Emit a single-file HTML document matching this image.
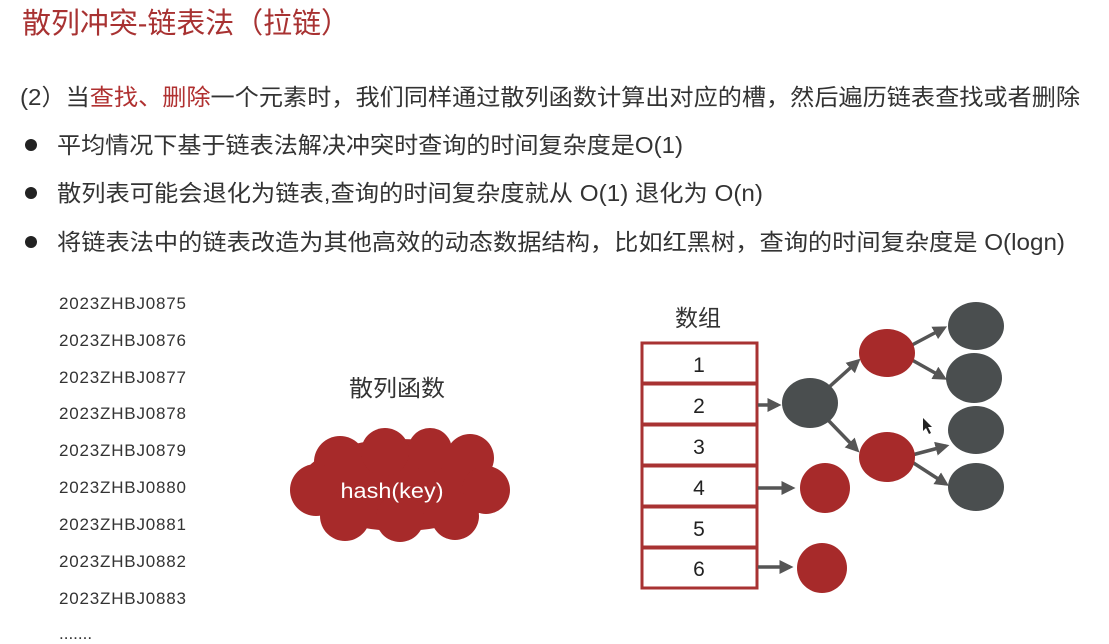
<!DOCTYPE html>
<html><head><meta charset="utf-8"><style>
html,body{margin:0;padding:0;background:#fff;width:1109px;height:644px;overflow:hidden}
svg{display:block}
text{font-family:"Liberation Sans","Noto Sans CJK SC",sans-serif}
</style></head><body>
<svg width="1109" height="644" viewBox="0 0 1109 644">
<text x="22" y="33" font-size="29" fill="#a83232" textLength="328" lengthAdjust="spacingAndGlyphs">散列冲突-链表法（拉链）</text>
<text x="20" y="105" font-size="23" fill="#333" textLength="1060" lengthAdjust="spacingAndGlyphs">(2）当<tspan fill="#b03030">查找、删除</tspan>一个元素时，我们同样通过散列函数计算出对应的槽，然后遍历链表查找或者删除</text>
<g fill="#222"><circle cx="31" cy="145" r="6"/><circle cx="31" cy="193" r="6"/><circle cx="31" cy="242" r="6"/></g>
<text x="57" y="153" font-size="23" fill="#333" textLength="626" lengthAdjust="spacingAndGlyphs">平均情况下基于链表法解决冲突时查询的时间复杂度是O(1)</text>
<text x="57" y="201" font-size="23" fill="#333" textLength="706" lengthAdjust="spacingAndGlyphs">散列表可能会退化为链表,查询的时间复杂度就从 O(1) 退化为 O(n)</text>
<text x="57" y="250" font-size="23" fill="#333" textLength="1008" lengthAdjust="spacingAndGlyphs">将链表法中的链表改造为其他高效的动态数据结构，比如红黑树，查询的时间复杂度是 O(logn)</text>
<g font-size="17" fill="#333">
<text x="59" y="309" textLength="127">2023ZHBJ0875</text><text x="59" y="346" textLength="127">2023ZHBJ0876</text><text x="59" y="383" textLength="127">2023ZHBJ0877</text>
<text x="59" y="419" textLength="127">2023ZHBJ0878</text><text x="59" y="456" textLength="127">2023ZHBJ0879</text><text x="59" y="493" textLength="127">2023ZHBJ0880</text>
<text x="59" y="530" textLength="127">2023ZHBJ0881</text><text x="59" y="567" textLength="127">2023ZHBJ0882</text><text x="59" y="604" textLength="127">2023ZHBJ0883</text>
<text x="59" y="639">.......</text></g>
<text x="349" y="396" font-size="23" fill="#333" textLength="96" lengthAdjust="spacingAndGlyphs">散列函数</text>
<g fill="#a72a2a">
<ellipse cx="400" cy="485" rx="100" ry="46"/>
<circle cx="340" cy="462" r="26"/><circle cx="385" cy="452" r="24"/><circle cx="430" cy="450" r="22"/><circle cx="470" cy="458" r="24"/>
<circle cx="316" cy="490" r="26"/><circle cx="486" cy="490" r="24"/><circle cx="345" cy="516" r="25"/><circle cx="400" cy="518" r="24"/><circle cx="455" cy="516" r="24"/>
</g>
<text x="392" y="498" font-size="21" fill="#fff" text-anchor="middle" textLength="103" lengthAdjust="spacingAndGlyphs">hash(key)</text>
<text x="698" y="326" font-size="23" fill="#333" text-anchor="middle">数组</text>
<g fill="#fff" stroke="#a83232" stroke-width="3">
<rect x="642" y="343" width="115" height="40"/><rect x="642" y="384" width="115" height="40"/><rect x="642" y="425" width="115" height="40"/>
<rect x="642" y="466" width="115" height="40"/><rect x="642" y="507" width="115" height="40"/><rect x="642" y="548" width="115" height="40"/></g>
<g font-size="21" fill="#222" text-anchor="middle">
<text x="699" y="372">1</text><text x="699" y="413">2</text><text x="699" y="454">3</text><text x="699" y="495">4</text><text x="699" y="536">5</text><text x="699" y="576">6</text></g>
<defs><marker id="a" markerWidth="4" markerHeight="4" refX="3" refY="2" orient="auto"><path d="M0,0L4,2L0,4z" fill="#555"/></marker></defs>
<g stroke="#555" stroke-width="3.5" marker-end="url(#a)">
<line x1="758" y1="405" x2="778" y2="405"/>
<line x1="758" y1="488" x2="792" y2="488"/>
<line x1="758" y1="567" x2="790" y2="567"/>
<line x1="828" y1="388" x2="858" y2="361"/>
<line x1="828" y1="420" x2="857" y2="450"/>
<line x1="912" y1="345" x2="944" y2="328"/>
<line x1="912" y1="360" x2="944" y2="378"/>
<line x1="912" y1="455" x2="946" y2="446"/>
<line x1="912" y1="462" x2="946" y2="484"/>
</g>
<g fill="#4a4e4f">
<ellipse cx="810" cy="403" rx="28" ry="25"/>
<ellipse cx="976" cy="326" rx="28" ry="24"/><ellipse cx="974" cy="378" rx="28" ry="25"/>
<ellipse cx="976" cy="430" rx="28" ry="24"/><ellipse cx="976" cy="487" rx="28" ry="24"/></g>
<g fill="#a72a2a">
<ellipse cx="887" cy="353" rx="28" ry="24"/><ellipse cx="887" cy="457" rx="28" ry="25"/>
<ellipse cx="825" cy="488" rx="25" ry="25"/><ellipse cx="822" cy="568" rx="25" ry="25"/></g>
<path d="M923,418 L923,431 L926,428 L929,434 L931,433 L928,427 L932,427 Z" fill="#222"/>
</svg>
</body></html>
